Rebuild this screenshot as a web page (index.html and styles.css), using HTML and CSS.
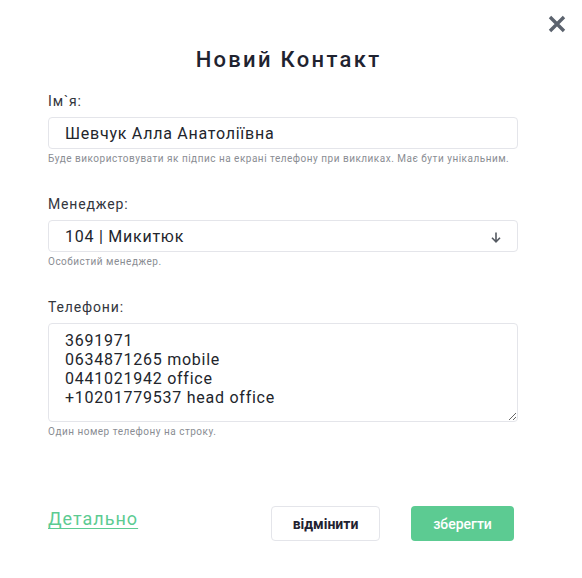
FILE: index.html
```html
<!DOCTYPE html>
<html lang="uk">
<head>
    <meta charset="UTF-8">
    <meta name="viewport" content="width=device-width, initial-scale=1.0">
    <title>Новий Контакт</title>
    <link rel="stylesheet" href="styles.css">
</head>
<body>
    <div class="dialog">
        <button class="close" type="button" aria-label="Закрити">
            <svg width="18" height="18" viewBox="0 0 18 18">
                <path d="M2 2 L16 16 M16 2 L2 16" stroke="#5c636e" stroke-width="3.4" stroke-linecap="butt"/>
            </svg>
        </button>

        <h1>Новий Контакт</h1>

        <form id="contactForm">
            <div class="field">
                <label for="name">Ім`я:</label>
                <input type="text" id="name" name="name" value="Шевчук Алла Анатоліївна">
                <div class="hint">Буде використовувати як підпис на екрані телефону при викликах. Має бути унікальним.</div>
            </div>

            <div class="field">
                <label for="manager">Менеджер:</label>
                <div class="selectWrap">
                    <select id="manager" name="manager">
                        <option>104 | Микитюк</option>
                    </select>
                    <svg class="arrow" width="10" height="11" viewBox="0 0 10 11">
                        <path d="M5 0.5 V9.5 M1 5.8 L5 9.8 L9 5.8" stroke="#555a62" stroke-width="1.6" fill="none"/>
                    </svg>
                </div>
                <div class="hint">Особистий менеджер.</div>
            </div>

            <div class="field">
                <label for="phones">Телефони:</label>
                <textarea id="phones" name="phones">3691971
0634871265 mobile
0441021942 office
+10201779537 head office</textarea>
                <div class="hint">Один номер телефону на строку.</div>
            </div>

            <div class="actions">
                <a href="#" class="details">Детально</a>
                <div class="buttons">
                    <button type="button" class="cancel">відмінити</button>
                    <button type="submit" class="save">зберегти</button>
                </div>
            </div>
        </form>
    </div>
</body>
</html>
```

FILE: styles.css
```css
body {
    margin: 0;
    font-family: Roboto, "Liberation Sans", Arial, sans-serif;
    background-color: #fff;
    color: #1f2230;
}

.dialog {
    position: relative;
    width: 582px;
    height: 578px;
    box-sizing: border-box;
    padding: 45px 64px 0 48px;
}

.close {
    position: absolute;
    top: 15px;
    right: 16px;
    padding: 0;
    border: none;
    background: none;
    cursor: pointer;
    line-height: 0;
}

h1 {
    margin: 0 0 16px 11px;
    font-size: 22px;
    line-height: 30px;
    font-weight: 500;
    letter-spacing: 2.3px;
    text-align: center;
    color: #1f2330;
}

form {
    display: flex;
    flex-direction: column;
}

.field {
    display: flex;
    flex-direction: column;
    margin-bottom: 28px;
}

label {
    font-size: 14px;
    line-height: 20px;
    color: #33363d;
    letter-spacing: 0.85px;
    margin-bottom: 6px;
}

input[type="text"],
select,
textarea {
    font-family: inherit;
    font-size: 16px;
    color: #22252c;
    letter-spacing: 0.75px;
    border: 1px solid #e4e5ea;
    border-radius: 4px;
    background-color: #fff;
    box-sizing: border-box;
    width: 470px;
    outline: none;
}

input[type="text"],
select {
    height: 32px;
    padding: 0 16px;
}

select {
    appearance: none;
    -webkit-appearance: none;
    display: block;
}

.selectWrap {
    position: relative;
    width: 470px;
}

.arrow {
    position: absolute;
    right: 17px;
    top: 12px;
    pointer-events: none;
}

textarea {
    height: 99px;
    padding: 7px 16px;
    line-height: 19px;
    resize: vertical;
    display: block;
}

.hint {
    font-size: 10px;
    line-height: 14px;
    margin-top: 3px;
    color: #8a8d93;
    letter-spacing: 0.5px;
}

.actions {
    display: flex;
    align-items: center;
    justify-content: space-between;
    margin-top: 39px;
    padding-right: 4px;
}

.details {
    font-size: 18px;
    color: #5ccb92;
    letter-spacing: 1px;
    text-decoration: underline;
    text-underline-offset: 3px;
    margin-top: -10px;
}

.buttons {
    display: flex;
    gap: 31px;
}

button.cancel,
button.save {
    font-family: inherit;
    font-size: 14px;
    height: 35px;
    border-radius: 4px;
    cursor: pointer;
}

button.cancel {
    width: 109px;
    background-color: #fff;
    border: 1px solid #e4e5ea;
    color: #1f2230;
    font-weight: 700;
}

button.save {
    width: 103px;
    background-color: #5ccb92;
    border: none;
    color: #fff;
    font-weight: 500;
}

.save:hover {
    background-color: #4fb882;
}
```
